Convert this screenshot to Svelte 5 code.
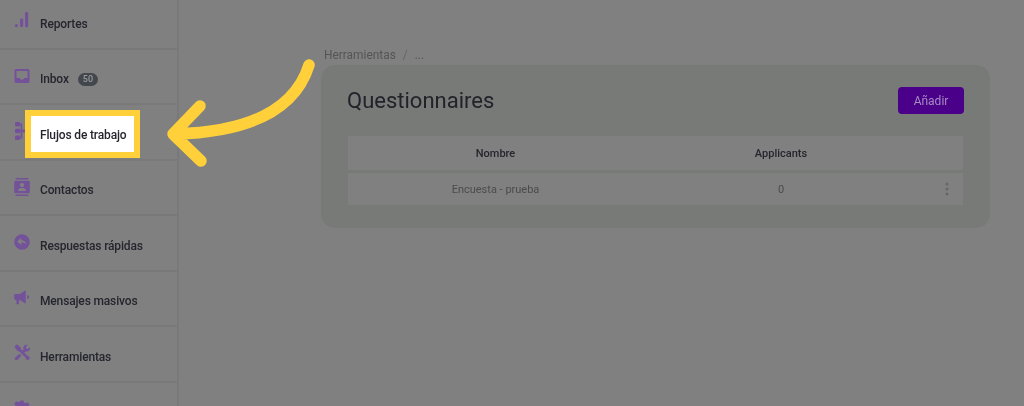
<script>
  const items = [
    { label: 'Reportes', icon: 'chart' },
    { label: 'Inbox', icon: 'inbox', badge: '50' },
    { label: 'Flujos de trabajo', icon: 'flow', marked: true },
    { label: 'Contactos', icon: 'contact' },
    { label: 'Respuestas rápidas', icon: 'reply' },
    { label: 'Mensajes masivos', icon: 'horn' },
    { label: 'Herramientas', icon: 'tools' },
    { label: '', icon: 'gear' }
  ];
</script>

<div class="page">
  <nav class="side">
    {#each items as item}
      <div class="row">
        {#if item.marked}<span class="mark"></span>{/if}
        <svg class="ico" viewBox="0 0 16 18" aria-hidden="true">
          {#if item.icon === 'chart'}
            <circle cx="2.4" cy="14.6" r="1.6" /><rect x="6" y="7.5" width="3.2" height="8.6" rx="1.2" /><rect x="11" y="1" width="3.2" height="15.2" rx="1.2" />
          {:else if item.icon === 'inbox'}
            <path fill-rule="evenodd" d="M2 2h12a1.5 1.5 0 0 1 1.5 1.500v11A1.5 1.5 0 0 1 14 16H2a1.500 1.500 0 0 1-1.500-1.500v-11A1.500 1.500 0 0 1 2 2zm.5 2v7h3.200a2.400 2.400 0 0 0 4.600 0h3.200V4z" />
          {:else if item.icon === 'flow'}
            <rect x="1" y="0" width="5" height="4.600" rx="1" /><rect x="1" y="6.700" width="5" height="4.600" rx="1" /><rect x="1" y="13.400" width="5" height="4.600" rx="1" /><rect x="8.500" y="7.500" width="3" height="3" rx=".6" /><path d="M5 8.200h4v1.600H5zM5 1.600h3.200v14.800H5V15h1.600V3H5z" />
          {:else if item.icon === 'contact'}
            <path fill-rule="evenodd" d="M1.600 0h12.800v1.400H1.600zM1.600 16.600h12.800V18H1.600zM1.400 2.800h13.200a1.200 1.200 0 0 1 1.200 1.200v10a1.200 1.200 0 0 1-1.200 1.200H1.400A1.200 1.200 0 0 1 .2 14V4a1.200 1.200 0 0 1 1.200-1.200zM8 5a2.100 2.100 0 1 0 0 4.200A2.100 2.100 0 0 0 8 5zm-3.700 8h7.400v-1.200c0-1.200-2.400-1.800-3.700-1.800s-3.700.6-3.700 1.800z" />
          {:else if item.icon === 'reply'}
            <path fill-rule="evenodd" d="M8 1.200a7.800 7.800 0 1 1 0 15.600A7.800 7.800 0 0 1 8 1.200zM3.200 8.400 7.200 5v2.200c2.800.2 4.800 1.400 5.600 4.400-1.200-1.500-3-2-5.600-2V12z" />
          {:else if item.icon === 'horn'}
            <path d="M.2 6.400A1.400 1.400 0 0 1 1.600 5h4.200l5-3.200h1v12.400h-1L5.800 11H5v4.200H2.400V11h-.8A1.400 1.400 0 0 1 .2 9.600zM13.200 6a2 2 0 0 1 0 4z" />
          {:else if item.icon === 'tools'}
            <path d="M1.600 1 3.400.6l3.400 3.200.2 1.400L13.600 12l1.600.6.6 1.800-1.600 1.600-1.800-.6-.6-1.600L5 7.200 3.600 7 .6 3.200zM10.200 1.400c1-.8 2.800-.8 3.700-.5L11.800 3l.5 1.600 1.600.5 2-2.100c.3 1 0 2.600-.7 3.500-.9.9-2.200 1.100-3.300.7L10 8.900 8.200 7.100l1.300-1.700c-.4-1.200-.2-3 .7-4zM5.600 9.800l1.800 1.800-3.800 4.200c-.6.6-1.800.6-2.400 0s-.6-1.600 0-2.200z" />
          {:else}
            <path fill-rule="evenodd" d="M6.400.6h3.200l.4 2 1.600.7 1.800-1.100 2.200 2.200-1.100 1.800.7 1.600 1.800.4v3.200l-1.800.4-.7 1.600 1.100 1.800-2.200 2.200-1.800-1.100-1.600.7-.4 2H6.400l-.4-2-1.600-.7-1.800 1.100-2.200-2.200 1.100-1.800-.7-1.600-1.800-.4V7.200l1.800-.4.7-1.600L.2 3.400 2.400 1.200l1.800 1.100L5.800 1.600zM8 6.200a2.800 2.800 0 1 0 0 5.600 2.800 2.800 0 0 0 0-5.600z" />
          {/if}
        </svg>
        {#if item.label}<span class="label">{item.label}</span>{/if}
        {#if item.badge}<span class="badge">{item.badge}</span>{/if}
      </div>
    {/each}
  </nav>

  <main class="main">
    <div class="crumbs"><span>Herramientas</span><span class="sep">/</span><span>...</span></div>
    <section class="card">
      <header class="head">
        <h1>Questionnaires</h1>
        <button type="button">Añadir</button>
      </header>
      <div class="table">
        <div class="grid top"><b>Nombre</b><b>Applicants</b><span></span></div>
        <div class="grid body">
          <span>Encuesta - prueba</span><span>0</span>
          <svg class="dots" viewBox="0 0 4 14" aria-hidden="true"><circle cx="2" cy="2" r="1.5" /><circle cx="2" cy="7" r="1.5" /><circle cx="2" cy="12" r="1.5" /></svg>
        </div>
      </div>
    </section>
  </main>

  <svg class="arrow" viewBox="0 0 1024 406" aria-hidden="true">
    <path d="M309 65C295 110 250 132 175 134M200 106 173 134 201 161" />
  </svg>
</div>

<style>
  :global(body) { margin: 0; background: #808080; }
  .page {
    position: relative;
    width: 1024px;
    height: 406px;
    overflow: hidden;
    display: flex;
    background: #808080;
    font-family: Roboto, "Noto Sans", sans-serif;
    color: #25252e;
    filter: blur(0.35px);
  }
  .side {
    flex: 0 0 177px;
    margin-top: -6px;
    border-right: 2px solid #797979;
  }
  .row {
    position: relative;
    box-sizing: border-box;
    height: 55.5px;
    display: flex;
    align-items: center;
    padding: 6px 0 0 14px;
    border-bottom: 2px solid #797979;
    font-size: 12px;
    letter-spacing: -0.15px;
    font-weight: 500;
  }
  .ico {
    flex: none;
    width: 16px;
    height: 18px;
    margin: -7px 10px 0 0;
    fill: #74529a;
  }
  .label { position: relative; white-space: nowrap; }
  .badge {
    margin-left: 9px;
    padding: 0 5px;
    height: 13px;
    line-height: 13px;
    border-radius: 7px;
    background: #41474d;
    color: #9a9a9a;
    font-size: 9px;
    letter-spacing: 0;
  }
  .mark {
    position: absolute;
    left: 25px;
    top: 5px;
    width: 103px;
    height: 36px;
    border: 6px solid #ffd03a;
    background: #fff;
  }
  .main { flex: 1; padding: 47px 0 0 142px; }
  .crumbs {
    display: flex;
    gap: 6px;
    height: 18px;
    font-size: 11.9px;
    line-height: 16px;
    color: #555;
    margin-left: 3px;
  }
  .sep { color: #666; margin: 0 1px; }
  .card {
    box-sizing: border-box;
    width: 669px;
    height: 163px;
    padding: 22px 26px 0 26px;
    border-radius: 14px;
    background: #787a78;
  }
  .head { display: flex; justify-content: space-between; align-items: flex-start; height: 49px; }
  h1 {
    margin: 0;
    font-size: 22px;
    line-height: 27px;
    font-weight: 400;
    color: #22222a;
  }
  button {
    width: 66px;
    height: 27px;
    border: 0;
    border-radius: 4px;
    background: #4a0088;
    color: #a68bc4;
    font: 400 12px Roboto, sans-serif;
  }
  .table { width: 615px; background: #808080; margin-left: 1px; }
  .grid {
    display: grid;
    grid-template-columns: 295px 276px 1fr;
    align-items: center;
    text-align: center;
  }
  .top { height: 34px; font-size: 11px; color: #25252e; }
  .top b { font-weight: 500; }
  .body {
    height: 32px;
    border-top: 3px solid #787a78;
    font-size: 11px;
    color: #4b4b4b;
  }
  .dots { width: 4px; height: 14px; justify-self: end; margin-right: 14px; fill: #666; }
  .arrow {
    position: absolute;
    inset: 0;
    width: 1024px;
    height: 406px;
    fill: none;
    stroke: #ffd03a;
    stroke-width: 11.5;
    stroke-linecap: round;
    stroke-linejoin: round;
  }
</style>
